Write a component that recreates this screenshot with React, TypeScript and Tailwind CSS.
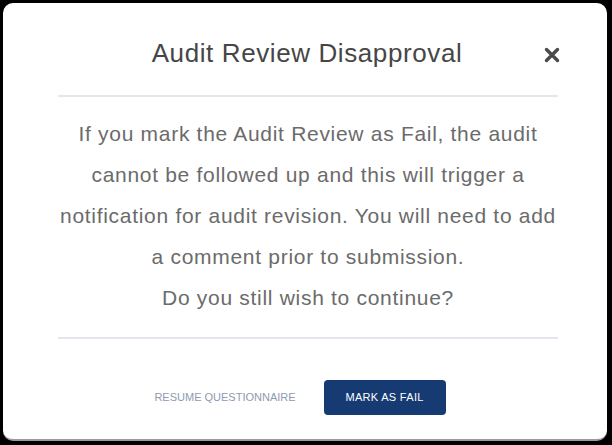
import React from "react";

const App: React.FC = (): JSX.Element => {
  return (
    <div
      className="w-[612px] h-[445px] bg-black pt-[3px] pl-[3px] pr-[5px] pb-[4px]"
      style={{ fontFamily: '"Liberation Sans", Arial, sans-serif' }}
    >
      <div className="flex flex-col h-full bg-white rounded-[10px] border-b-[2px] border-[#9a9a9a] pl-[55px] pr-[49px]">
        <div className="flex items-center pt-[36px]">
          <div className="w-[16px]" />
          <h1 className="flex-1 text-center text-[26px] leading-[28px] tracking-[0.6px] text-[#464646]">
            Audit Review Disapproval
          </h1>
          <button className="w-[24px] h-[24px] -mr-[6px] mt-[4px] flex items-center justify-center text-[#4a4a4a]">
            <svg width="16" height="16" viewBox="0 0 16 16">
              <path
                d="M2.5 2.5 L13.5 13.5 M13.5 2.5 L2.5 13.5"
                stroke="currentColor"
                strokeWidth="3.4"
                strokeLinecap="round"
              />
            </svg>
          </button>
        </div>
        <div className="h-[2px] bg-[#e3e6ee] mt-[28px]" />
        <div className="pt-[16px] text-center text-[21px] leading-[41px] tracking-[0.7px] text-[#6b6b6b]">
          <p>
            If you mark the Audit Review as Fail, the audit
            <br />
            cannot be followed up and this will trigger a
            <br />
            notification for audit revision. You will need to add
            <br />
            a comment prior to submission.
          </p>
          <p>Do you still wish to continue?</p>
        </div>
        <div className="h-[2px] bg-[#e3e6ee] mt-[19px]" />
        <div className="flex justify-center items-center gap-[12px] mt-[41px] pr-[32px]">
          <button className="px-[16px] h-[35px] text-[11px] text-[#8e9bb0] uppercase">
            Resume Questionnaire
          </button>
          <button className="w-[122px] h-[35px] rounded-[4px] bg-[#163b73] text-white text-[11px] tracking-[0.3px] uppercase">
            Mark as Fail
          </button>
        </div>
      </div>
    </div>
  );
};

export default App;
